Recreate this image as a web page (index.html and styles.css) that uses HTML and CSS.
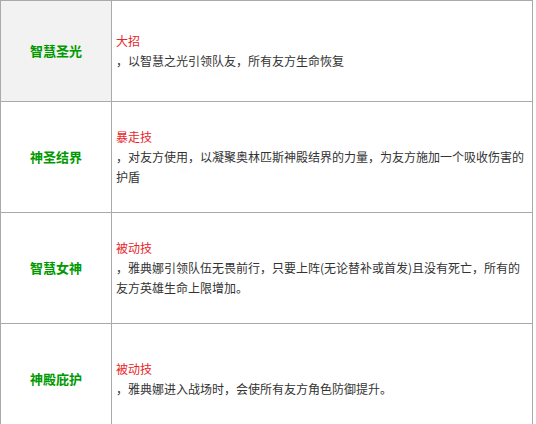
FILE: index.html
```html
<!DOCTYPE html>
<html lang="zh-CN">
<head>
<meta charset="utf-8">
<link rel="stylesheet" href="styles.css">
</head>
<body>
<table class="skills">
  <tr class="row row-first">
    <td class="name name-shaded">智慧圣光</td>
    <td class="desc"><span class="type">大招</span><br>，以智慧之光引领队友，所有友方生命恢复</td>
  </tr>
  <tr class="row">
    <td class="name">神圣结界</td>
    <td class="desc"><span class="type">暴走技</span><br>，对友方使用，以凝聚奥林匹斯神殿结界的力量，为友方施加一个吸收伤害的护盾</td>
  </tr>
  <tr class="row">
    <td class="name">智慧女神</td>
    <td class="desc"><span class="type">被动技</span><br>，雅典娜引领队伍无畏前行，只要上阵(无论替补或首发)且没有死亡，所有的友方英雄生命上限增加。</td>
  </tr>
  <tr class="row">
    <td class="name">神殿庇护</td>
    <td class="desc"><span class="type">被动技</span><br>，雅典娜进入战场时，会使所有友方角色防御提升。</td>
  </tr>
</table>
</body>
</html>
```
FILE: styles.css
```css
html, body {
  margin: 0;
  padding: 0;
  background: #ffffff;
}
.skills {
  border-collapse: collapse;
  width: 533px;
  table-layout: fixed;
  font-family: "Noto Sans CJK SC", "Liberation Sans", sans-serif;
  font-size: 12px;
  line-height: 20px;
  color: #333333;
}
.skills td {
  border: 1px solid #aaaaaa;
  vertical-align: middle;
  padding: 0 4px;
}
.row td {
  height: 111px;
  box-sizing: border-box;
}
.row-first td {
  height: 101px;
}
.name {
  width: 111px;
  box-sizing: border-box;
  text-align: center;
  color: #009900;
  font-weight: bold;
  font-size: 13px;
}
.name-shaded {
  background: #f2f2f2;
}
.type {
  color: #e8262a;
}
```
